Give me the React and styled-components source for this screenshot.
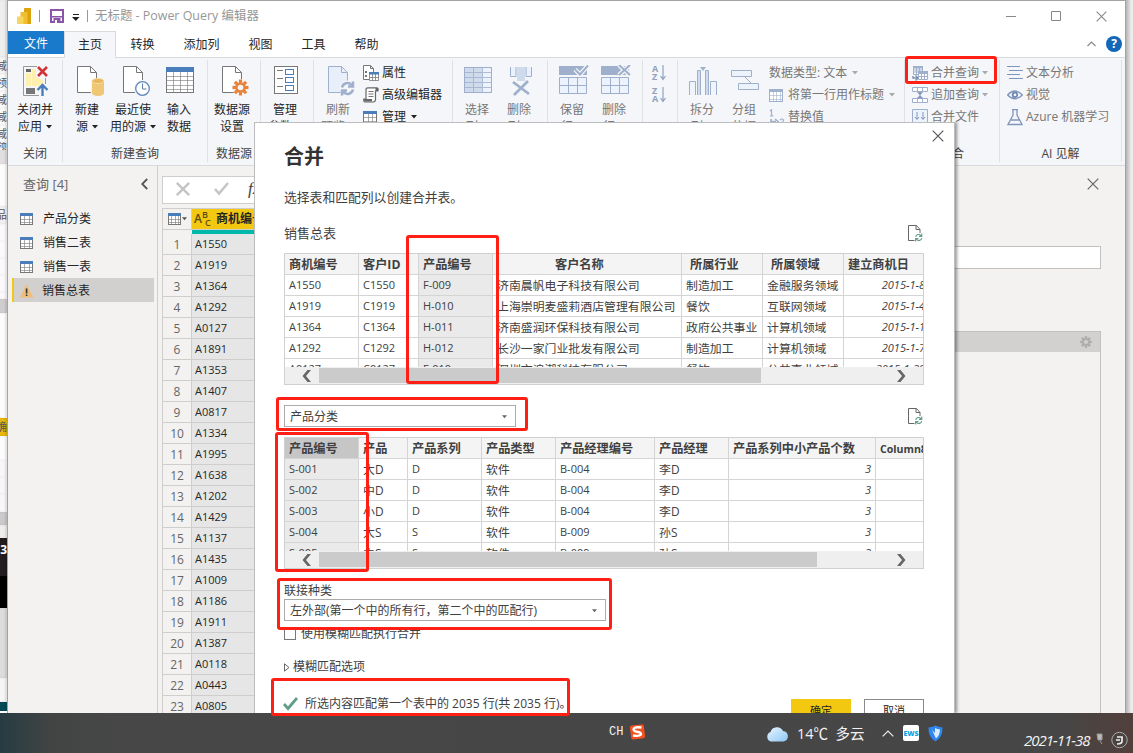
import styled, { createGlobalStyle, css } from "styled-components";

const GlobalStyle = createGlobalStyle`
  * {
    box-sizing: border-box;
  }

  body {
    margin: 0;
    overflow: hidden;
    font-family: "Open Sans", "Noto Sans CJK SC", sans-serif;
    font-size: 12px;
    line-height: 18px;
    color: #262626;
  }

  svg {
    display: block;
    flex: none;
  }
`;

const BLUE = "#4a7ebb";
const GRAY = "#777777";
const FADED = "#9fb0cc";
const FADED_FILL = "#cfdaeb";

/* ---------- icons ---------- */

const Page = ({ stroke = GRAY, fill = "#fff" }) => (
  <>
    <path d="M1.500 1.500h13l6 6v20h-19z" fill={fill} stroke={stroke} />
    <path d="M14.500 1.500v6h6" fill="none" stroke={stroke} />
  </>
);

const Gear = ({ cx, cy, r, color, hole = "#f4f6f9" }) => (
  <g>
    {[0, 45, 90, 135].map((a) => (
      <rect
        key={a}
        x={cx - r * 0.2}
        y={cy - r}
        width={r * 0.4}
        height={r * 2}
        fill={color}
        transform={`rotate(${a} ${cx} ${cy})`}
      />
    ))}
    <circle cx={cx} cy={cy} r={r * 0.66} fill={color} />
    <circle cx={cx} cy={cy} r={r * 0.35} fill={hole} />
  </g>
);

const CloseApplyIcon = () => (
  <svg width="28" height="32" viewBox="0 0 28 32">
    <path d="M15 1.500H1.500v29H17M23.500 13v6" fill="none" stroke="#999" />
    <rect x="4" y="4" width="5" height="3" fill="#666" />
    <path d="M4 8h5v13H4zM10 4h4v8l7 3v5l-5 1h-6z" fill="#fff0b0" />
    <rect x="4" y="23" width="9" height="6" fill="#777" />
    <path d="M16 2l9 9M25 2l-9 9" stroke="#d13438" strokeWidth="2.600" />
    <path d="M20.500 31V20.500M15.500 25l5-5 5 5" fill="none" stroke={BLUE} strokeWidth="2.400" />
  </svg>
);

const NewSourceIcon = () => (
  <svg width="32" height="32" viewBox="-4 0 32 32">
    <Page />
    <path d="M15 15h13v17H15z" fill="#f4f6f9" />
    <path d="M16 16v12c0 4 12 4 12 0V16z" fill="#f0c775" />
    <ellipse cx="22" cy="16" rx="6" ry="2.500" fill="#e8b95c" stroke="#f6dca8" />
  </svg>
);

const RecentIcon = () => (
  <svg width="32" height="32" viewBox="-4 0 32 32">
    <Page />
    <circle cx="20.500" cy="23.500" r="8.500" fill="#f4f6f9" />
    <circle cx="20.500" cy="23.500" r="6.800" fill="#fff" stroke="#5d87bd" strokeWidth="1.300" />
    <path d="M20.500 18.500v5.500h4" fill="none" stroke="#5d7ea8" />
  </svg>
);

const TableIcon = ({ w = 28, h = 26, cols = 4, rows = 5, line = GRAY, head = BLUE, fill = "#fff", headH = 5 }) => (
  <svg width={w} height={h} viewBox={`0 0 ${w} ${h}`} shapeRendering="crispEdges">
    <rect x="0.500" y="0.500" width={w - 1} height={h - 1} fill={fill} stroke={line} />
    {Array.from({ length: cols - 1 }, (_, i) => (
      <rect key={i} x={Math.round(((i + 1) * w) / cols)} y={headH} width="1" height={h - headH} fill={line} opacity="0.6" />
    ))}
    {Array.from({ length: rows - 1 }, (_, i) => (
      <rect key={i} x="0" y={Math.round(headH + ((i + 1) * (h - headH)) / rows)} width={w} height="1" fill={line} opacity="0.6" />
    ))}
    <rect width={w} height={headH} fill={head} />
  </svg>
);

const SourceSettingsIcon = () => (
  <svg width="32" height="32" viewBox="-4 0 32 32">
    <Page />
    <circle cx="19.500" cy="22.500" r="8.500" fill="#f4f6f9" />
    <Gear cx={19.5} cy={22.5} r={8} color="#e8833a" />
  </svg>
);

const ParamsIcon = () => (
  <svg width="24" height="32" viewBox="0 0 24 32" shapeRendering="crispEdges">
    <rect x="0.500" y="1.500" width="23" height="27" fill="#fff" stroke={GRAY} />
    {[4, 12, 20].map((y) => (
      <g key={y}>
        <rect x="3" y={y + 1} width="6" height="1" fill={GRAY} />
        <rect x="11.500" y={y + 0.5} width="8" height="5" fill="#fff" stroke={BLUE} />
      </g>
    ))}
  </svg>
);

const SyncArrows = ({ color, ...rest }) => (
  <g fill="none" stroke={color} {...rest}>
    <path d="M2 7A5.500 5.500 0 0 1 11.500 4.500M13 1v5H8M13 9A5.500 5.500 0 0 1 3.500 11.500M2 15v-5h5" />
  </g>
);

const RefreshIcon = () => (
  <svg width="32" height="32" viewBox="-4 0 32 32">
    <Page stroke={FADED} fill="#e8effa" />
    <circle cx="20.500" cy="23.500" r="8" fill="#f4f6f9" />
    <SyncArrows color={FADED} strokeWidth="2.500" transform="translate(13 15.500)" />
  </svg>
);

const ChooseColumnsIcon = () => (
  <svg width="28" height="32" viewBox="0 0 28 32" shapeRendering="crispEdges">
    <rect x="0.500" y="2.500" width="27" height="25" fill="#edf3fc" stroke={FADED} />
    <rect x="1" y="3" width="17" height="24" fill={FADED_FILL} />
    <path d="M1 7.500h26M1 12.500h26M1 17.500h26M1 22.500h26M9.500 3v24M18.500 3v24" stroke={FADED} opacity=".8" />
  </svg>
);

const RemoveColumnsIcon = () => (
  <svg width="24" height="32" viewBox="-1 0 24 32">
    <rect x="8" y="2" width="8" height="14" fill={FADED_FILL} />
    <path d="M1.500 2v9.500h5.500V2M22.500 2v9.500h-5.500V2" fill="#e9f1fd" stroke={FADED} />
    <path d="M4 17l16 12M19 16L5 30" stroke={FADED} strokeWidth="2.800" />
  </svg>
);

const RowsIcon = ({ remove }) => (
  <svg width="32" height="32" viewBox="-2 0 32 32">
    <path d="M0 1h28v9H0z" fill={FADED} />
    <path d="M.5 12.500h27v16H.5zM.5 20.500h27M9.500 12.500v16M18.500 12.500v16" fill="#edf3fc" stroke={FADED} />
    <path
      d={remove ? "M18 0l11 10M29 0L18 10" : "M16 4.500l5 5 8-9"}
      fill="none"
      stroke="#f4f6f9"
      strokeWidth="4.500"
    />
    <path d={remove ? "M18 0l11 10M29 0L18 10" : "M16 4.500l5 5 8-9"} fill="none" stroke={FADED} strokeWidth="2" />
  </svg>
);

const SplitIcon = () => (
  <svg width="28" height="32" viewBox="0 -2 28 32">
    <path d="M.5 28V14.500h6V28M21.500 28V14.500h6V28" fill="#f0f5fd" stroke={FADED} />
    <path d="M8.500 28V3.500h3V28M16.500 28V3.500h3V28" fill={FADED_FILL} stroke={FADED} />
    <path d="M11 0h6l-3 4z" fill={FADED} />
  </svg>
);

const GroupByIcon = () => (
  <svg width="28" height="32" viewBox="0 -1 28 32">
    <path d="M13 10l7 7" stroke={FADED} />
    <path d="M.5 4.500h20v6H.5zM7.500 17.500h20v6h-20z" fill="#edf3fc" stroke={FADED} />
  </svg>
);

const PropertiesIcon = () => (
  <svg width="16" height="16" viewBox="0 0 16 16">
    <path d="M.5.500h7l3 3v11H.5zM7.500.500v3h3" fill="#fff" stroke={GRAY} />
    <path d="M2 6h2v2H2zM2 10h2v2H2z" fill={GRAY} />
    <path d="M6.500 8.500h9v7h-9zM9.500 8.500v7M12.500 8.500v7M6.500 12.500h9" fill="#fff" stroke={GRAY} strokeWidth=".8" />
    <path d="M6 7h10v2.500H6z" fill={BLUE} />
  </svg>
);

const ScriptIcon = () => (
  <svg width="16" height="16" viewBox="0 0 16 16">
    <path d="M3 12V2.500Q3 .8 5 .8h9Q15.500 1 15 4h-2.500v9q-.5 2-2 2H2Q.5 15 .8 12z" fill="#fff" stroke="#666" strokeWidth="1.200" />
    <path d="M1 12h8v2.500H1.500zM12.500 1h2.500v3h-2.500z" fill="#666" />
    <path d="M5.500 4.500h5M5.500 7h5M5.500 9.500h5" stroke="#777" />
  </svg>
);

const SortIcon = ({ top, bottom }) => (
  <SortBox>
    <SortLetters>
      <span>{top}</span>
      <span>{bottom}</span>
    </SortLetters>
    <svg width="6" height="16" viewBox="0 0 6 16">
      <path d="M3 0v14M.5 11L3 14.500 5.500 11" fill="none" stroke="#90a2c0" strokeWidth="1.200" />
    </svg>
  </SortBox>
);

const ReplaceIcon = () => (
  <svg width="16" height="16" viewBox="0 0 16 16">
    <path d="M1 2l1.500-1.200V7M1 7h3.500" fill="none" stroke={FADED} strokeWidth="1.200" />
    <path d="M2 10v2.500h5M6 10l3 2.500L6 15" fill="none" stroke={FADED} strokeWidth="1.600" />
    <path d="M11 11q2-2 3.500 0 0 2-3 4H15" fill="none" stroke={FADED} strokeWidth="1.200" />
  </svg>
);

const MergeIcon = () => (
  <svg width="16" height="16" viewBox="0 0 16 16">
    <path d="M1.500 1.500h9v8h-9zM4.500 2v7M7.500 2v7M1.500 5h9M1.500 7h9" fill="#fff" stroke={FADED} />
    <path d="M1 1h10v2.500H1zM6 6h10v3H6z" fill={FADED} />
    <path d="M6.500 8.500h9v6h-9zM9.500 9v6M12.500 9v6M6.500 11.500h9" fill="#fff" stroke={FADED} />
    <path d="M1 11v2h4M3.500 10.500L6 13l-2.500 2.500" fill="none" stroke="#7f93b5" strokeWidth="1.500" />
  </svg>
);

const AppendIcon = () => (
  <svg width="16" height="16" viewBox="0 0 16 16">
    <path d="M.5.500h15v4H.5zM.5 11.500h15v4H.5zM5.500.500v4M10.500.500v4M5.500 11.500v4M10.500 11.500v4" fill="#fff" stroke={FADED} />
    <path d="M8 5v6M5.500 5.500h5L8 8zM5.500 11h5L8 8.500z" fill="#8296b8" stroke="#8296b8" strokeWidth=".6" />
  </svg>
);

const CombineFilesIcon = () => (
  <svg width="16" height="16" viewBox="0 0 16 16">
    <path d="M.5.500h15v14H.5z" fill="#edf3fc" stroke={FADED} />
    <path d="M5 3v7M3 8l2 2.500L7 8M11 3v7M9 8l2 2.500L13 8" fill="none" stroke="#8296b8" />
  </svg>
);

const LinesIcon = () => (
  <svg width="16" height="16" viewBox="0 0 16 16">
    <path d="M0 1.500h13M2 5.500h14M0 9.500h13M2 13.500h14" stroke="#8095bb" />
  </svg>
);

const EyeIcon = () => (
  <svg width="16" height="16" viewBox="0 0 16 16">
    <path d="M.6 8Q8 0 15.400 8 8 15.500.6 8z" fill="none" stroke="#8095bb" strokeWidth="1.300" />
    <circle cx="8" cy="7.800" r="2.300" fill="none" stroke="#7188b3" strokeWidth="1.800" />
  </svg>
);

const FlaskIcon = () => (
  <svg width="16" height="17" viewBox="0 0 16 17">
    <path d="M5 .7h6M6 1v5L1 15.500h14L10 6V1M4 11h8" fill="none" stroke="#8095bb" strokeWidth="1.300" />
  </svg>
);

const Cross = ({ size = 12, color = "#666", weight = 1.2 }) => (
  <svg width={size} height={size} viewBox="0 0 12 12">
    <path d="M.7.700l10.600 10.600M11.300.700L.7 11.300" stroke={color} strokeWidth={weight} />
  </svg>
);

const Check = ({ w = 15, color, weight = 2.5 }) => (
  <svg width={w} height={w * 0.87} viewBox="0 0 15 13">
    <path d="M1 7l4 4.500L14 1" fill="none" stroke={color} strokeWidth={weight} />
  </svg>
);

const Arrow = ({ color = "#333", w = 6 }) => (
  <svg width={w} height="4" viewBox="0 0 6 4">
    <path d="M0 0h6L3 3.500z" fill={color} />
  </svg>
);

const ScrollArrow = ({ right }) => (
  <svg width="9" height="12" viewBox="0 0 9 12">
    <path d={right ? "M0 0h3.500l5 6-5 6H0l5-6z" : "M9 0H5.500L.5 6l5 6H9L4 6z"} fill="#666" />
  </svg>
);

const PageRefreshIcon = () => (
  <svg width="15" height="17" viewBox="0 0 15 17">
    <path d="M6.500 15.500h-6V.500h8l3.500 4V8M8 .500v4h4" fill="none" stroke="#666" />
    <SyncArrows color="#5f9f87" strokeWidth="2" transform="translate(6.500 8) scale(.56)" />
  </svg>
);

/* ---------- data ---------- */

const queries = ["产品分类", "销售二表", "销售一表", "销售总表"];

const gridRows = [
  "A1550", "A1919", "A1364", "A1292", "A0127", "A1891", "A1353", "A1407",
  "A0817", "A1334", "A1995", "A1638", "A1202", "A1429", "A1137", "A1435",
  "A1009", "A1186", "A1911", "A1387", "A0118", "A0443", "A0805",
];

const salesTable = {
  columns: [
    { name: "商机编号", width: 74 },
    { name: "客户ID", width: 60 },
    { name: "产品编号", width: 74, selected: true },
    { name: "客户名称", width: 189, indent: 58 },
    { name: "所属行业", width: 81, indent: 4 },
    { name: "所属领域", width: 81, indent: 4 },
    { name: "建立商机日", width: 86, numeric: true },
  ],
  rows: [
    ["A1550", "C1550", "F-009", "济南晨帆电子科技有限公司", "制造加工", "金融服务领域", "2015-1-8"],
    ["A1919", "C1919", "H-010", "上海崇明麦盛莉酒店管理有限公司", "餐饮", "互联网领域", "2015-1-4"],
    ["A1364", "C1364", "H-011", "济南盛润环保科技有限公司", "政府公共事业", "计算机领域", "2015-1-1"],
    ["A1292", "C1292", "H-012", "长沙一家门业批发有限公司", "制造加工", "计算机领域", "2015-1-7"],
    ["A0127", "C0127", "F-010", "深圳市浪潮科技有限公司", "餐饮", "公共事业领域", "2015-1-29"],
  ],
};

const productTable = {
  columns: [
    { name: "产品编号", width: 74, selected: true, active: true },
    { name: "产品", width: 49 },
    { name: "产品系列", width: 74 },
    { name: "产品类型", width: 74 },
    { name: "产品经理编号", width: 99 },
    { name: "产品经理", width: 74 },
    { name: "产品系列中小产品个数", width: 147, numeric: true },
    { name: "Column8", width: 74 },
  ],
  rows: [
    ["S-001", "大D", "D", "软件", "B-004", "李D", "3", ""],
    ["S-002", "中D", "D", "软件", "B-004", "李D", "3", ""],
    ["S-003", "小D", "D", "软件", "B-004", "李D", "3", ""],
    ["S-004", "大S", "S", "软件", "B-009", "孙S", "3", ""],
    ["S-005", "中S", "S", "软件", "B-009", "孙S", "3", ""],
  ],
};

const slivers = [
  { h: 57, bg: "#efeeee" },
  { h: 17, bg: "#f4f2f2", text: "域" },
  { h: 17, bg: "#fbfafa", text: "领" },
  { h: 17, bg: "#fbfafa", text: "域" },
  { h: 17, bg: "#fbfafa", text: "域" },
  { h: 17, bg: "#fbfafa", text: "域" },
  { h: 8, bg: "#fbfafa", text: "领" },
  { h: 14, bg: "#e2dfe1" },
  { h: 42, bg: "#fdfdfd" },
  { h: 18, bg: "#f3f0f2", text: "品" },
  { h: 17, bg: "#fbf9fb" },
  { h: 17, bg: "#fbf9fb" },
  { h: 17, bg: "#fbf9fb" },
  { h: 17, bg: "#fbf9fb" },
  { h: 7, bg: "#fbf9fb" },
  { h: 14, bg: "#d0cdd0" },
  { h: 105, bg: "#fcfcfd" },
  { h: 18, bg: "#e8b80c", text: "确" },
  { h: 24, bg: "#fcfcfd" },
  { h: 17, bg: "#f8f6f8" },
  { h: 17, bg: "#f8f6f8" },
  { h: 18, bg: "#f8f6f8" },
  { h: 13, bg: "#cbc9cb" },
  { h: 13, bg: "#efeeec" },
  { h: 38, bg: "#231d20", text: "3", light: true },
  { h: 32, bg: "#000" },
  { h: 70, bg: "#dcdcdc" },
  { h: 24, bg: "#f5f5f5" },
  { h: 9, bg: "#004a55" },
];

const hasHan = (text) => /[\u4e00-\u9fff]/.test(text);

/* ---------- components ---------- */

const BigButton = ({ icon, lines, width, menu, muted }) => (
  <BigButtonBox $width={width} $muted={muted}>
    <BigIcon>{icon}</BigIcon>
    <span>{lines[0]}</span>
    <BigSecond>
      {lines[1]}
      {menu && <Arrow color={muted ? "#999" : "#222"} />}
    </BigSecond>
  </BigButtonBox>
);

const SmallButton = ({ icon, label, menu, muted, gap }) => (
  <SmallButtonBox $muted={muted} $gap={gap}>
    {icon}
    {label}
    {menu && <Arrow color={muted ? "#aaa" : "#222"} />}
  </SmallButtonBox>
);

const RibbonGroup = ({ width, label, pad, children }) => (
  <GroupBox $width={width}>
    <GroupItems $pad={pad}>{children}</GroupItems>
    <GroupLabel>{label}</GroupLabel>
  </GroupBox>
);

const Ribbon = () => (
  <RibbonBox>
    <RibbonGroup width={55} label="关闭" pad={4}>
      <BigButton icon={<CloseApplyIcon />} lines={["关闭并", "应用"]} width={46} menu />
    </RibbonGroup>
    <RibbonGroup width={145} label="新建查询" pad={1}>
      <BigButton icon={<NewSourceIcon />} lines={["新建", "源"]} width={46} menu />
      <BigButton icon={<RecentIcon />} lines={["最近使", "用的源"]} width={46} menu />
      <BigButton icon={<TopGap><TableIcon /></TopGap>} lines={["输入", "数据"]} width={46} />
    </RibbonGroup>
    <RibbonGroup width={53} label="数据源" pad={1}>
      <BigButton icon={<SourceSettingsIcon />} lines={["数据源", "设置"]} width={46} />
    </RibbonGroup>
    <RibbonGroup width={53} label="参数" pad={1}>
      <BigButton icon={<ParamsIcon />} lines={["管理", "参数"]} width={46} menu />
    </RibbonGroup>
    <RibbonGroup width={139} label="查询" pad={1}>
      <BigButton icon={<RefreshIcon />} lines={["刷新", "预览"]} width={46} menu muted />
      <SmallList $left={2}>
        <SmallButton icon={<PropertiesIcon />} label="属性" gap={3} />
        <SmallButton icon={<ScriptIcon />} label="高级编辑器" gap={3} />
        <SmallButton icon={<TableIcon w={14} h={13} cols={3} rows={3} headH={3} />} label="管理" menu gap={5} />
      </SmallList>
    </RibbonGroup>
    <RibbonGroup width={95} label="管理列" pad={3}>
      <BigButton icon={<ChooseColumnsIcon />} lines={["选择", "列"]} width={42} menu muted />
      <BigButton icon={<RemoveColumnsIcon />} lines={["删除", "列"]} width={42} menu muted />
    </RibbonGroup>
    <RibbonGroup width={95} label="减少行" pad={3}>
      <BigButton icon={<RowsIcon />} lines={["保留", "行"]} width={42} menu muted />
      <BigButton icon={<RowsIcon remove />} lines={["删除", "行"]} width={42} menu muted />
    </RibbonGroup>
    <RibbonGroup width={35} label="排序" pad={9}>
      <SmallList $left={0}>
        <SortIcon top="A" bottom="Z" />
        <SortIcon top="Z" bottom="A" />
      </SmallList>
    </RibbonGroup>
    <RibbonGroup width={227} label="转换" pad={3}>
      <BigButton icon={<SplitIcon />} lines={["拆分", "列"]} width={42} menu muted />
      <BigButton icon={<GroupByIcon />} lines={["分组", "依据"]} width={42} muted />
      <SmallList $left={4}>
        <SmallButton label="数据类型: 文本" menu muted gap={5} />
        <SmallButton
          icon={<TableIcon w={14} h={13} cols={4} rows={3} headH={3} line="#9fb0cc" head="#9fb0cc" />}
          label="将第一行用作标题"
          menu
          muted
          gap={5}
        />
        <SmallButton icon={<ReplaceIcon />} label="替换值" muted gap={3} />
      </SmallList>
    </RibbonGroup>
    <RibbonGroup width={95} label="组合" pad={7}>
      <SmallList $left={0}>
        <SmallButton icon={<MergeIcon />} label="合并查询" menu muted gap={3} />
        <SmallButton icon={<AppendIcon />} label="追加查询" menu muted gap={3} />
        <SmallButton icon={<CombineFilesIcon />} label="合并文件" muted gap={3} />
      </SmallList>
    </RibbonGroup>
    <RibbonGroup width={122} label="AI 见解" pad={7}>
      <SmallList $left={0}>
        <SmallButton icon={<LinesIcon />} label="文本分析" muted gap={3} />
        <SmallButton icon={<EyeIcon />} label="视觉" muted gap={3} />
        <SmallButton icon={<FlaskIcon />} label="Azure 机器学习" muted gap={3} />
      </SmallList>
    </RibbonGroup>
  </RibbonBox>
);

const PreviewTable = ({ columns, rows, thumb }) => {
  const template = columns.map((c) => `${c.width}px`).join(" ");
  return (
    <TableFrame>
      <TableRows>
        <TableRow $template={template}>
          {columns.map((c) => (
            <HeadCell key={c.name} $han={hasHan(c.name)} $indent={c.indent} $selected={c.selected} $active={c.active}>
              {c.name}
            </HeadCell>
          ))}
        </TableRow>
        {rows.map((row) => (
          <TableRow key={row[0]} $template={template}>
            {row.map((value, i) => (
              <Cell
                key={columns[i].name}
                $han={hasHan(value)}
                $selected={columns[i].selected}
                $numeric={columns[i].numeric}
              >
                {value}
              </Cell>
            ))}
          </TableRow>
        ))}
      </TableRows>
      <ScrollBar>
        <ScrollArrow />
        <Thumb style={{ width: thumb }} />
        <ScrollArrow right />
      </ScrollBar>
    </TableFrame>
  );
};

const MergeDialog = () => (
  <Dialog>
    <DialogClose>
      <Cross size={12} color="#555" />
    </DialogClose>
    <DialogTitle>合并</DialogTitle>
    <DialogHint>选择表和匹配列以创建合并表。</DialogHint>
    <TableBar $top={16} $large>
      销售总表
      <PageRefreshIcon />
    </TableBar>
    <PreviewTable {...salesTable} thumb={442} />
    <TableBar $top={20}>
      <Select $width={232}>
        产品分类
        <Arrow color="#666" w={5} />
      </Select>
      <PageRefreshIcon />
    </TableBar>
    <PreviewTable {...productTable} thumb={498} />
    <JoinLabel>联接种类</JoinLabel>
    <Select $width={322}>
      左外部(第一个中的所有行，第二个中的匹配行)
      <Arrow color="#666" w={5} />
    </Select>
    <FuzzyRow>
      <CheckBox />
      使用模糊匹配执行合并
    </FuzzyRow>
    <Expander>
      <svg width="6" height="9" viewBox="0 0 6 9">
        <path d="M.5.800v7.400l4.500-3.700z" fill="none" stroke="#666" />
      </svg>
      模糊匹配选项
    </Expander>
    <MatchRow>
      <Check color="#5f9f87" weight={2.8} />
      所选内容匹配第一个表中的 2035 行(共 2035 行)。
    </MatchRow>
    <Actions>
      <ActionButton $primary>确定</ActionButton>
      <ActionButton>取消</ActionButton>
    </Actions>
  </Dialog>
);

const TaskBar = () => (
  <TaskBarBox>
    <InputMethod>
      CH
      <svg width="17" height="18" viewBox="0 0 17 18">
        <rect x="1.500" y="2" width="14" height="14" rx="2" fill="#f4511e" transform="rotate(-7 8 9)" />
        <path d="M12.500 4.500Q5 3.500 4.500 6.500 5 8.500 9 9q3.500.5 3 2.500-1.500 2-8 1" fill="none" stroke="#fff" strokeWidth="2.300" />
      </svg>
    </InputMethod>
    <Weather>
      <svg width="23" height="16" viewBox="0 0 23 16">
        <defs>
          <linearGradient id="cloud" x1="0" y1="0" x2="1" y2="1">
            <stop offset="0" stopColor="#e8f5ff" />
            <stop offset="1" stopColor="#8ec6f2" />
          </linearGradient>
        </defs>
        <path d="M5 15.500a5 5 0 0 1-.5-9.500 6.800 6.800 0 0 1 12.500-1 5.300 5.300 0 0 1 .5 10.500z" fill="url(#cloud)" />
      </svg>
      14℃&nbsp; 多云
    </Weather>
    <Tray>
      <svg width="12" height="7" viewBox="0 0 12 7">
        <path d="M.7 6.300L6 1l5.300 5.300" fill="none" stroke="#eee" strokeWidth="1.200" />
      </svg>
      <EwsBadge>EWS</EwsBadge>
      <svg width="15" height="17" viewBox="0 0 15 17">
        <path d="M7.500.500Q10 2 14.500 2.500 15 12 7.500 16.500 0 12 .5 2.500 5 2 7.500.500z" fill="#2f86ee" />
        <path d="M7 3Q9 4 12 4.500 12 10 8 13.500L4 5l3 3z" fill="#dcecff" />
      </svg>
    </Tray>
    <Clock>
      2021-11-38
      <svg width="8" height="14" viewBox="0 0 8 14">
        <path d="M1 1h5v6H2zM4 8l2 3" fill="#bbb" stroke="#999" />
      </svg>
      <svg width="17" height="18" viewBox="0 0 17 18">
        <circle cx="8.500" cy="9" r="7.700" fill="#4a4341" stroke="#aaa" />
        <path d="M6 6h5v4q0 3-5 3M5 9h4" fill="none" stroke="#eee" strokeWidth="1.700" />
      </svg>
    </Clock>
  </TaskBarBox>
);

const App = () => (
  <Screen>
    <GlobalStyle />
    <Desktop>
      <LeftEdge>
        {slivers.map((s, i) => (
          <Sliver key={i} $h={s.h} $bg={s.bg} $light={s.light}>
            {s.text}
          </Sliver>
        ))}
      </LeftEdge>
      <Window>
        <TitleBar>
          <svg width="15" height="17" viewBox="0 0 15 17">
            <rect x="7" y="0" width="7" height="16" rx=".5" fill="#dda20c" />
            <rect x="3.500" y="4" width="7" height="12" rx=".5" fill="#f0be2e" />
            <rect x="0" y="8.500" width="6.500" height="7.500" rx=".5" fill="#f6d65f" />
          </svg>
          <TitleDivider $left={7} $right={10} />
          <svg width="14" height="14" viewBox="0 0 14 14">
            <path d="M1 1h12v12H1z" fill="#fff" stroke="#8a55a8" strokeWidth="2" />
            <path d="M1 7h12v1.500H1zM3.500 9h7v5h-7z" fill="#8a55a8" />
            <path d="M5 11h2v3H5z" fill="#fff" />
          </svg>
          <QuickMenu>
            <svg width="8" height="7" viewBox="0 0 8 7">
              <path d="M1 .5h6" stroke="#222" />
              <path d="M0 3h7.500L3.800 7z" fill="#222" />
            </svg>
          </QuickMenu>
          <TitleDivider $left={7} $right={7} />
          <Title>无标题 - Power Query 编辑器</Title>
          <WindowButtons>
            <svg width="10" height="10" viewBox="0 0 10 10">
              <path d="M0 5.500h10" stroke="#888" />
            </svg>
            <svg width="10" height="10" viewBox="0 0 10 10">
              <path d="M.5.500h9v9h-9z" fill="none" stroke="#888" />
            </svg>
            <Cross size={11} color="#888" />
          </WindowButtons>
        </TitleBar>
        <TabBar>
          <FileTab>文件</FileTab>
          <HomeTab>主页</HomeTab>
          {["转换", "添加列", "视图", "工具", "帮助"].map((name) => (
            <Tab key={name}>{name}</Tab>
          ))}
          <TabTools>
            <svg width="9" height="6" viewBox="0 0 9 6">
              <path d="M.5 5L4.500 1l4 4" fill="none" stroke="#888" strokeWidth="1.200" />
            </svg>
            <Help>?</Help>
          </TabTools>
        </TabBar>
        <Ribbon />
        <Body>
          <QueryPane>
            <PaneHead>
              查询 [4]
              <svg width="7" height="12" viewBox="0 0 7 12">
                <path d="M6.200 1L1.200 6l5 5" fill="none" stroke="#555" strokeWidth="1.800" />
              </svg>
            </PaneHead>
            {queries.map((name, i) => (
              <QueryItem key={name} $active={i === 3}>
                {i === 3 ? (
                  <svg width="15" height="14" viewBox="0 0 15 14">
                    <path d="M7.500.500l7 13H.5z" fill="#efbe7d" />
                    <path d="M6.800 4.500h1.600v5H6.800zM6.800 10.500h1.600V12H6.800z" fill="#333" />
                  </svg>
                ) : (
                  <TableIcon w={13} h={12} cols={3} rows={3} headH={3} />
                )}
                {name}
              </QueryItem>
            ))}
          </QueryPane>
          <GridPane>
            <FormulaBar>
              <Cross size={14} color="#c4c4c4" weight={2} />
              <Check w={15} color="#c4c4c4" />
              <Fx>fx</Fx>
            </FormulaBar>
            <Grid>
              <GridHead>
                <CornerCell>
                  <TableIcon w={13} h={12} cols={4} rows={3} headH={3} />
                  <Arrow color="#555" w={5} />
                </CornerCell>
                <ColumnHead>
                  <TypeMark>
                    A<sup>B</sup>
                    <sub>C</sub>
                  </TypeMark>
                  商机编号
                </ColumnHead>
              </GridHead>
              <QualityBar />
              {gridRows.map((code, i) => (
                <GridRow key={code}>
                  <RowNumber>{i + 1}</RowNumber>
                  <RowValue>{code}</RowValue>
                </GridRow>
              ))}
            </Grid>
          </GridPane>
          <SettingsPane>
            <SettingsClose>
              <Cross size={12} color="#666" />
            </SettingsClose>
            <NameField />
            <StepList>
              <Step>
                <svg width="12" height="12" viewBox="0 0 12 12">
                  <Gear cx={6} cy={6} r={5.8} color="#adadad" hole="#d2d1cf" />
                </svg>
              </Step>
            </StepList>
          </SettingsPane>
        </Body>
      </Window>
      <RightEdge />
    </Desktop>
    <TaskBar />
    <MergeDialog />
    <Mark $x={905} $y={56} $w={92} $h={28} />
    <Mark $x={406} $y={235} $w={93} $h={149} />
    <Mark $x={276} $y={397} $w={252} $h={34} />
    <Mark $x={275} $y={432} $w={94} $h={140} />
    <Mark $x={277} $y={578} $w={335} $h={52} />
    <Mark $x={271} $y={678} $w={299} $h={38} />
  </Screen>
);

/* ---------- styles ---------- */

const Screen = styled.div`
  position: relative;
  display: flex;
  flex-direction: column;
  width: 1133px;
  height: 753px;
  overflow: hidden;
  white-space: nowrap;
`;

const Desktop = styled.div`
  display: flex;
  height: 713px;
`;

const LeftEdge = styled.div`
  display: flex;
  flex-direction: column;
  width: 7px;
  overflow: hidden;
`;

const Sliver = styled.div`
  flex: none;
  display: flex;
  align-items: center;
  justify-content: flex-end;
  width: 7px;
  height: ${(p) => p.$h}px;
  overflow: hidden;
  background: ${(p) => p.$bg};
  box-shadow: inset -2px 0 2px rgba(0, 0, 0, 0.1);
  color: ${(p) => (p.$light ? "#fff" : "#555")};
  font-size: ${(p) => (p.$light ? 12 : 11)}px;
  font-weight: ${(p) => (p.$light ? 700 : 400)};
  line-height: ${(p) => (p.$light ? 10 : 18)}px;
  padding-bottom: ${(p) => (p.$light ? 14 : 0)}px;
`;

const Window = styled.div`
  display: flex;
  flex-direction: column;
  width: 1119px;
  border: solid #a3a3a3;
  border-width: 1px 1px 0 1px;
  background: #f3f2f1;
`;

const RightEdge = styled.div`
  flex: 1;
  background: linear-gradient(to right, #b4b4b4, #ececec 75%);
`;

const TitleBar = styled.div`
  display: flex;
  align-items: center;
  height: 30px;
  padding: 0 18px 0 9px;
  background: #fff;
`;

const TitleDivider = styled.span`
  width: 1px;
  height: 12px;
  margin: 0 ${(p) => p.$right}px 0 ${(p) => p.$left}px;
  background: #999;
`;

const QuickMenu = styled.span`
  padding: 2px 0 0 8px;
`;

const Title = styled.span`
  flex: 1;
  font-size: 12.45px;
  color: #979797;
`;

const WindowButtons = styled.div`
  display: flex;
  align-items: center;
  gap: 35px;
`;

const TabBar = styled.div`
  display: flex;
  height: 27px;
  background: #fff;
  border-bottom: 1px solid #d8dadc;
`;

const FileTab = styled.div`
  width: 56px;
  height: 23px;
  line-height: 25px;
  text-align: center;
  background: #1979ca;
  color: #fff;
`;

const HomeTab = styled.div`
  width: 52px;
  height: 27px;
  line-height: 25px;
  text-align: center;
  background: #f4f6f9;
  border: 1px solid #d8dadc;
  border-bottom: none;
`;

const Tab = styled.div`
  padding: 0 14.5px;
  line-height: 27px;
`;

const TabTools = styled.div`
  display: flex;
  align-items: center;
  gap: 10px;
  margin-left: auto;
  padding-right: 3px;
`;

const Help = styled.span`
  width: 16px;
  height: 16px;
  border-radius: 50%;
  background: #1267b8;
  color: #fff;
  font-size: 12px;
  font-weight: 700;
  line-height: 16px;
  text-align: center;
`;

const RibbonBox = styled.div`
  display: flex;
  height: 108px;
  padding: 2px 0 3px;
  background: #f4f6f9;
  border-bottom: 1px solid #d8dadc;
`;

const GroupBox = styled.div`
  flex: none;
  display: flex;
  flex-direction: column;
  width: ${(p) => p.$width}px;
  border-right: 1px solid #dfe1e4;
`;

const GroupItems = styled.div`
  flex: none;
  display: flex;
  height: 85px;
  padding-left: ${(p) => p.$pad}px;
`;

const GroupLabel = styled.div`
  text-align: center;
  color: #444;
`;

const BigButtonBox = styled.div`
  display: flex;
  flex-direction: column;
  align-items: center;
  width: ${(p) => p.$width}px;
  padding-top: 5px;
  color: ${(p) => (p.$muted ? "#777" : "#262626")};
  line-height: 17px;
`;

const BigIcon = styled.div`
  height: 36px;
  margin-left: 2px;
`;

const TopGap = styled.div`
  padding-top: 2px;
`;

const BigSecond = styled.span`
  display: flex;
  align-items: center;
  gap: 4px;
`;

const SmallList = styled.div`
  display: flex;
  flex-direction: column;
  gap: 4px;
  padding-top: 4px;
  margin-left: ${(p) => p.$left}px;
`;

const SmallButtonBox = styled.div`
  display: flex;
  align-items: center;
  gap: ${(p) => p.$gap}px;
  height: 18px;
  color: ${(p) => (p.$muted ? "#777" : "#262626")};
`;

const SortBox = styled.div`
  display: flex;
  align-items: center;
  gap: 2px;
  height: 18px;
`;

const SortLetters = styled.div`
  display: flex;
  flex-direction: column;
  color: #90a2c0;
  font-size: 9px;
  font-weight: 700;
  line-height: 8px;
`;

const Body = styled.div`
  display: flex;
  height: 547px;
`;

const QueryPane = styled.div`
  width: 150px;
  border-right: 1px solid #cfcecd;
`;

const PaneHead = styled.div`
  display: flex;
  align-items: center;
  justify-content: space-between;
  height: 40px;
  padding: 0 9px 4px 15px;
  font-size: 13px;
  color: #666;
`;

const QueryItem = styled.div`
  display: flex;
  align-items: center;
  gap: ${(p) => (p.$active ? 8 : 10)}px;
  height: 24px;
  margin: 0 3px 0 4px;
  padding-top: 2px;
  padding-left: ${(p) => (p.$active ? 5 : 8)}px;
  ${(p) =>
    p.$active &&
    css`
      border-left: 2px solid #f2c811;
      background: #d2d0ce;
    `}
`;

const GridPane = styled.div`
  flex: 1;
  padding: 10px 0 0 4px;
`;

const FormulaBar = styled.div`
  display: flex;
  align-items: center;
  gap: 24px;
  height: 28px;
  padding: 0 0 2px 13px;
  background: #fff;
  border: 1px solid #cfcecd;
`;

const Fx = styled.span`
  margin-left: -5px;
  font: italic 17px "Liberation Serif", serif;
  color: #444;
`;

const Grid = styled.div`
  margin-top: 4px;
  height: 505px;
  overflow: hidden;
  border: solid #cfcecd;
  border-width: 1px 0 0 1px;
`;

const GridHead = styled.div`
  display: flex;
  height: 21px;
  border-bottom: 1px solid #cfcecd;
`;

const CornerCell = styled.div`
  display: flex;
  align-items: center;
  gap: 1px;
  width: 29px;
  padding-left: 5px;
  border-right: 1px solid #cfcecd;
`;

const ColumnHead = styled.div`
  display: flex;
  align-items: center;
  width: 140px;
  padding-left: 2px;
  background: #f2c811;
  font-weight: 700;
`;

const TypeMark = styled.span`
  width: 22px;
  font-size: 12px;
  font-weight: 600;
  line-height: 10px;
  color: #5f4d10;

  sup,
  sub {
    font-size: 9px;
    line-height: 0;
  }

  sub {
    margin-left: -3px;
  }
`;

const QualityBar = styled.div`
  width: 140px;
  height: 4px;
  margin-left: 29px;
  background: #01b8aa;
`;

const GridRow = styled.div`
  display: flex;
  height: 21px;
  line-height: 21px;
  border-bottom: 1px solid #cfcecd;
`;

const RowNumber = styled.div`
  width: 29px;
  text-align: center;
  color: #666;
  border-right: 1px solid #cfcecd;
`;

const RowValue = styled.div`
  flex: 1;
  padding-left: 3px;
  background: #e6e6e6;
  font-size: 11px;
  line-height: 20px;
`;

const SettingsPane = styled.div`
  width: 200px;
  padding-right: 24px;
`;

const SettingsClose = styled.div`
  display: flex;
  justify-content: flex-end;
  height: 80px;
  margin-right: 2px;
  padding-top: 12px;
`;

const NameField = styled.div`
  height: 23px;
  background: #fff;
  border: 1px solid #c2c1c0;
`;

const StepList = styled.div`
  height: 390px;
  margin-top: 62px;
  border: 1px solid #c2c1c0;
`;

const Step = styled.div`
  display: flex;
  align-items: center;
  justify-content: flex-end;
  height: 20px;
  padding-right: 8px;
  background: #d2d1cf;
`;

const Dialog = styled.div`
  position: absolute;
  left: 254px;
  top: 122px;
  display: flex;
  flex-direction: column;
  width: 701px;
  height: 591px;
  padding: 0 31px 0 29px;
  overflow: hidden;
  background: #fff;
  border: solid #bdbdbd;
  border-width: 1px 1px 0 1px;
  box-shadow: 2px 0 3px rgba(0, 0, 0, 0.4);
  clip-path: inset(0 -8px 0 0);
  color: #404040;
`;

const DialogClose = styled.div`
  flex: none;
  display: flex;
  justify-content: flex-end;
  height: 21px;
  margin-right: -21px;
  padding-top: 7px;
`;

const DialogTitle = styled.div`
  font-size: 20px;
  font-weight: 700;
  line-height: 26px;
  color: #333;
`;

const DialogHint = styled.div`
  margin-top: 18px;
  font-size: 12.8px;
`;

const TableBar = styled.div`
  flex: none;
  display: flex;
  align-items: center;
  justify-content: space-between;
  height: 22px;
  margin-top: ${(p) => p.$top}px;
  margin-bottom: ${(p) => (p.$large ? 9 : 10)}px;
  font-size: ${(p) => (p.$large ? 13 : 12)}px;
`;

const TableFrame = styled.div`
  flex: none;
  width: 640px;
  height: 132px;
  border: 1px solid #d0d0d0;
`;

const TableRows = styled.div`
  height: 113px;
  overflow: hidden;
`;

const TableRow = styled.div`
  display: grid;
  grid-template-columns: ${(p) => p.$template};
  height: 21px;
`;

const Cell = styled.div`
  padding: 0 4px;
  overflow: hidden;
  font-size: ${(p) => (p.$han ? 11.9 : 11)}px;
  line-height: 20px;
  border: solid #d4d4d4;
  border-width: 0 1px 1px 0;
  background: ${(p) => (p.$selected ? "#eaeaea" : "#fff")};
  ${(p) =>
    p.$numeric &&
    css`
      font-style: italic;
      text-align: right;
    `}
`;

const HeadCell = styled(Cell)`
  padding-left: ${(p) => 4 + (p.$indent || 0)}px;
  padding-right: 0;
  font-size: ${(p) => (p.$han ? 12.2 : 10.6)}px;
  font-weight: 700;
  line-height: 22px;
  background: ${(p) => (p.$active ? "#c6c6c6" : p.$selected ? "#eaeaea" : "#f4f4f4")};
`;

const ScrollBar = styled.div`
  display: flex;
  align-items: center;
  height: 17px;
  padding: 0 17px;
  background: #efefef;

  svg:last-child {
    margin-left: auto;
  }
`;

const Thumb = styled.div`
  height: 15px;
  margin-left: 8px;
  background: #cbcbcb;
`;

const Select = styled.div`
  flex: none;
  display: flex;
  align-items: center;
  justify-content: space-between;
  width: ${(p) => p.$width}px;
  height: 22px;
  padding: 1px 8px 0 5px;
  border: 1px solid #ababab;
  background: #fff;
`;

const JoinLabel = styled.div`
  margin-top: 13px;
  line-height: 17px;
`;

const FuzzyRow = styled.div`
  display: flex;
  align-items: center;
  gap: 5px;
  margin-top: 4px;
`;

const CheckBox = styled.span`
  width: 12px;
  height: 12px;
  border: 1px solid #777;
`;

const Expander = styled.div`
  display: flex;
  align-items: center;
  gap: 3px;
  margin-top: 15px;
`;

const MatchRow = styled.div`
  display: flex;
  align-items: center;
  gap: 7px;
  margin: 19px 0 0 -1px;
`;

const Actions = styled.div`
  display: flex;
  justify-content: flex-end;
  gap: 13px;
  margin-top: -14px;
  margin-right: -1px;
`;

const ActionButton = styled.div`
  width: 60px;
  height: 23px;
  font-size: 11px;
  line-height: 21px;
  text-align: center;
  color: #222;
  background: ${(p) => (p.$primary ? "#f2c811" : "#fff")};
  border: 1px solid ${(p) => (p.$primary ? "#f2c811" : "#8a8a8a")};
`;

const Mark = styled.div`
  position: absolute;
  left: ${(p) => p.$x}px;
  top: ${(p) => p.$y}px;
  width: ${(p) => p.$w}px;
  height: ${(p) => p.$h}px;
  border: 3px solid #ff1f14;
  border-radius: 3px;
`;

const TaskBarBox = styled.div`
  display: flex;
  height: 40px;
  padding-left: 609px;
  background: linear-gradient(to right, #263c42, #424444 50px, #474747 120px, #464646 1060px, #523f3b);
  color: #f2f2f2;
`;

const InputMethod = styled.div`
  display: flex;
  align-items: center;
  gap: 6px;
  width: 157px;
  height: 37px;
  font: 12px "Liberation Mono", monospace;
`;

const Weather = styled.div`
  display: flex;
  align-items: center;
  gap: 8px;
  width: 116px;
  height: 41px;
  font-size: 14.5px;
`;

const Tray = styled.div`
  display: flex;
  align-items: center;
  gap: 9px;
  width: 142px;
  height: 40px;
`;

const EwsBadge = styled.span`
  width: 16px;
  height: 16px;
  border-radius: 2px;
  background: #fff;
  color: #13a3e0;
  font-size: 7px;
  font-weight: 800;
  line-height: 17px;
  text-align: center;
`;

const Clock = styled.div`
  display: flex;
  align-items: center;
  gap: 7px;
  padding-top: 13px;
  font-size: 15px;
  font-style: italic;
  letter-spacing: -1px;
`;

export default App;
